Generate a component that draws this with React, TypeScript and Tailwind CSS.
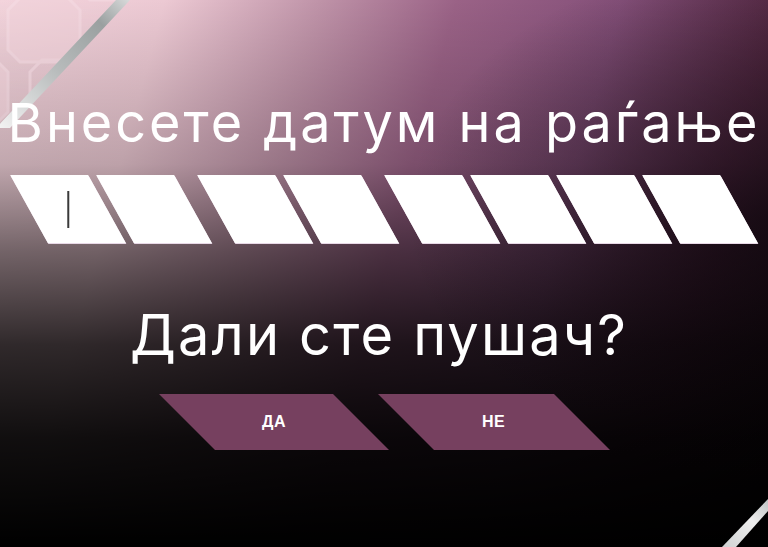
import React from "react";

function DateBox({ cursor }: { cursor?: boolean }) {
  return (
    <div className="w-[78px] h-[68px] bg-white skew-x-[29deg] flex items-center justify-center shadow-[0_1px_0_#e8d8e6]">
      {cursor ? <div className="w-[2px] h-[37px] bg-[#3a3a3a] -skew-x-[29deg]" /> : null}
    </div>
  );
}

function Choice({ label, w }: { label: string; w: string }) {
  return (
    <div className={`${w} h-[56px] bg-[#76405f] skew-x-[45deg] flex items-center justify-center`}>
      <span className="-skew-x-[45deg] text-white font-bold text-[16px] font-['Liberation_Sans',Arial,sans-serif] tracking-[0.03em]">
        {label}
      </span>
    </div>
  );
}

export default function App() {
  return (
    <div className="relative w-[768px] h-[547px] overflow-hidden font-['Inter','Noto_Sans',sans-serif] bg-[radial-gradient(ellipse_360px_260px_at_100%_40%,rgba(10,4,10,0.6),rgba(10,4,10,0)),linear-gradient(180deg,rgba(0,0,0,0)_0%,rgba(0,0,0,0.2)_30%,rgba(0,0,0,0.52)_46%,rgba(0,0,0,0.8)_63%,rgba(0,0,0,0.93)_80%,#000_100%),linear-gradient(105deg,#f3d4dc_0%,#ecc9d3_18%,#bf93a8_35%,#9a6286_50%,#85507a_68%,#5a2c48_85%,#2a1620_100%)]">
      {/* top-left pattern + silver stripe */}
      <svg className="absolute left-0 top-0" width="140" height="130" viewBox="0 0 140 130">
        <defs>
          <clipPath id="tri">
            <polygon points="0,0 120,0 0,125" />
          </clipPath>
          <linearGradient id="silver" x1="0" y1="1" x2="1" y2="0">
            <stop offset="0" stopColor="#f4f4f4" />
            <stop offset="0.45" stopColor="#b8bcbc" />
            <stop offset="0.8" stopColor="#9aa0a0" />
            <stop offset="1" stopColor="#d8dada" />
          </linearGradient>
        </defs>
        <g clipPath="url(#tri)" fill="none" stroke="#f8e2e8" strokeWidth="3" opacity="0.4">
          <path d="M8,10 L20,-2 L68,-2 L80,10 L80,50 L68,62 L20,62 L8,50 Z" fill="#f1d2da" />
          <path d="M-60,72 L-48,60 L-4,60 L8,72 L8,112 L-4,124 L-48,124 L-60,112 Z" fill="#f1d2da" />
          <path d="M78,-52 L90,-64 L134,-64 L146,-52 L146,-12 L134,0 L90,0 L78,-12 Z" />
          <path d="M30,72 L42,60 L86,60 L98,72 L98,112 L86,124 L42,124 L30,112 Z" />
        </g>
        <polygon points="116,0 130,0 10,128 -4,128" fill="url(#silver)" />
      </svg>

      {/* bottom-right silver stripe */}
      <svg className="absolute right-0 bottom-0" width="60" height="60" viewBox="0 0 60 60">
        <defs>
          <linearGradient id="silver2" x1="0" y1="1" x2="1" y2="0">
            <stop offset="0" stopColor="#cfd2d2" />
            <stop offset="0.6" stopColor="#eeeeee" />
            <stop offset="1" stopColor="#bfc3c3" />
          </linearGradient>
        </defs>
        <polygon points="60,12 60,24 28,60 14,60" fill="url(#silver2)" />
      </svg>

      <div className="relative flex flex-col items-center">
        <h1 className="mt-[96px] text-[54px] leading-[54px] font-normal text-white tracking-[0.055em] whitespace-nowrap">
          Внесете датум на раѓање
        </h1>

        <div className="mt-[25px] flex gap-[23px]">
          <div className="flex gap-2">
            <DateBox cursor />
            <DateBox />
          </div>
          <div className="flex gap-2">
            <DateBox />
            <DateBox />
          </div>
          <div className="flex gap-2">
            <DateBox />
            <DateBox />
            <DateBox />
            <DateBox />
          </div>
        </div>

        <h2 className="mt-[64px] mr-[10px] text-[56px] leading-[56px] font-normal text-white tracking-[0.038em] whitespace-nowrap">
          Дали сте пушач?
        </h2>

        <div className="mt-[31px] flex gap-[45px]">
          <Choice label="ДА" w="w-[174px]" />
          <Choice label="НЕ" w="w-[176px]" />
        </div>
      </div>
    </div>
  );
}
